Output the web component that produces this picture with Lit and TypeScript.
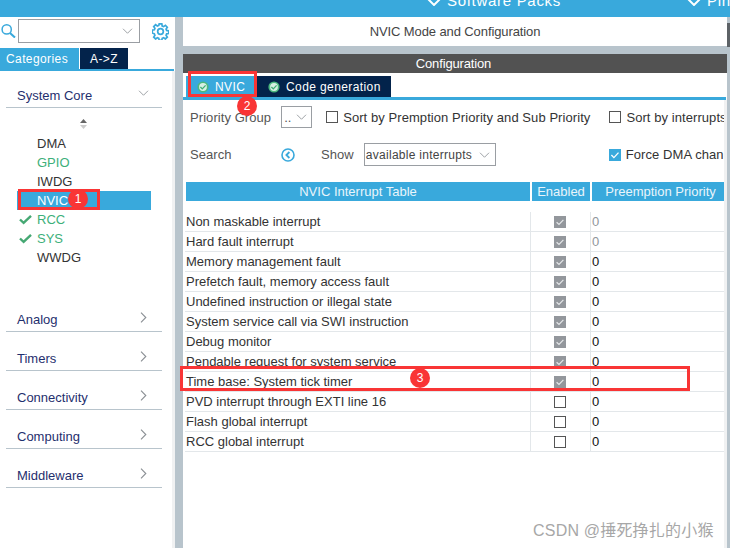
import { LitElement, html, css } from "lit";
import { customElement } from "lit/decorators.js";

const chevDown = (w = 14, h = 8, c = "#8a8f94", sw = 1.1) => html`<svg width=${w} height=${h} viewBox="0 0 14 8"><path d="M1 1l6 6 6-6" fill="none" stroke=${c} stroke-width=${sw}/></svg>`;
const chevRight = html`<svg class="cr" width="7" height="11" viewBox="0 0 7 11"><path d="M1 .7l4.8 4.8L1 10.3" fill="none" stroke="#8a8f94" stroke-width="1.1"/></svg>`;
const tick = html`<svg width="13" height="11" viewBox="0 0 13 11"><path d="M1 5.5l3.6 3.4L12 1.8" fill="none" stroke="#45a873" stroke-width="2.4"/></svg>`;
const okIcon = html`<svg width="12" height="12" viewBox="0 0 12 12"><circle cx="6" cy="6" r="5.6" fill="#4cb87f"/><circle cx="6" cy="6" r="3.9" fill="#d8f0e4"/><path d="M3.4 6l1.9 1.9 3.3-3.5" fill="none" stroke="#3fae75" stroke-width="1.3"/></svg>`;
const gear = html`<svg width="17" height="17" viewBox="0 0 18 18"><g fill="none" stroke="#39a9dc" stroke-width="1.8"><circle cx="9" cy="9" r="3"/><path d="M7.6 1h2.8l.4 2.2 1.5.6 1.9-1.3 2 2-1.3 1.9.6 1.5 2.2.4v2.8l-2.2.4-.6 1.5 1.3 1.9-2 2-1.9-1.3-1.5.6-.4 2.2H7.6l-.4-2.2-1.5-.6-1.9 1.3-2-2 1.3-1.9-.6-1.5L.3 10.4V7.6l2.2-.4.6-1.5-1.3-1.9 2-2 1.9 1.3 1.5-.6z"/></g></svg>`;
const search = html`<svg width="15" height="14" viewBox="0 0 15 14"><g fill="none" stroke="#39a9dc"><circle cx="5.7" cy="5.4" r="4.6" stroke-width="1.5"/><path d="M9 9l5 4.6" stroke-width="2"/></g></svg>`;
const back = html`<svg width="14" height="14" viewBox="0 0 14 14"><circle cx="7" cy="7" r="6" fill="none" stroke="#39a9dc" stroke-width="1.6"/><path d="M8.4 4L5.4 7l3 3" fill="none" stroke="#39a9dc" stroke-width="1.8"/></svg>`;
const checkGrey = html`<svg class="cb" width="12" height="12" viewBox="0 0 12 12"><rect width="12" height="12" fill="#93979c"/><path d="M2.6 6.2l2.4 2.3 4.4-4.6" fill="none" stroke="#e6e8ea" stroke-width="1.2"/></svg>`;
const checkEmpty = html`<svg class="cb" width="12" height="12" viewBox="0 0 12 12"><rect x=".5" y=".5" width="11" height="11" fill="#fff" stroke="#555" stroke-width="1"/></svg>`;
const checkBlue = html`<svg width="12" height="12" viewBox="0 0 12 12"><rect width="12" height="12" fill="#39a9dc"/><path d="M2.4 6l2.5 2.6 4.6-5" fill="none" stroke="#fff" stroke-width="1.3"/></svg>`;

const rows: [string, boolean, boolean][] = [
  ["Non maskable interrupt", true, true],
  ["Hard fault interrupt", true, true],
  ["Memory management fault", true, false],
  ["Prefetch fault, memory access fault", true, false],
  ["Undefined instruction or illegal state", true, false],
  ["System service call via SWI instruction", true, false],
  ["Debug monitor", true, false],
  ["Pendable request for system service", true, false],
  ["Time base: System tick timer", true, false],
  ["PVD interrupt through EXTI line 16", false, false],
  ["Flash global interrupt", false, false],
  ["RCC global interrupt", false, false],
];

const core: [string, string, boolean][] = [
  ["DMA", "", false],
  ["GPIO", "green", false],
  ["IWDG", "", false],
  ["NVIC", "sel", false],
  ["RCC", "green", true],
  ["SYS", "green", true],
  ["WWDG", "", false],
];

@customElement("app-root")
export class AppRoot extends LitElement {
  static styles = css`
    :host { display: block; width: 730px; height: 548px; position: relative; overflow: hidden; background: #fff;
      font-family: "Liberation Sans", Arial, sans-serif; font-size: 13px; color: #2b2f3a; }
    .top { height: 17px; background: #39a9dc; position: relative; overflow: hidden; color: #fff; font-size: 15px; letter-spacing: .7px; }
    .top .it { position: absolute; top: -8px; display: flex; align-items: center; gap: 6px; white-space: nowrap; line-height: 17px; }
    .top svg { margin-top: 3px; }
    .main { display: flex; height: 531px; }
    .left { width: 175px; flex: none; display: flex; flex-direction: column; }
    .leftbody { flex: 1; border-right: 3px solid #f0f1f2; }
    .gutter { width: 8px; flex: none; background: #b8c4cc; }
    .right { width: 544px; flex: none; display: flex; flex-direction: column; }
    .rightbody { flex: 1; border-right: 3px solid #f0f1f2; }
    .edge { width: 3px; flex: none; background: #b8c4cc; }
    .thumb { height: 24px; margin-top: 6px; background: #5d6266; }
    .searchrow { display: flex; align-items: center; height: 31px; padding: 0 0 3px 1px; box-sizing: border-box; }
    .combo { width: 122px; height: 24px; margin-left: 2px; border: 1px solid #9a9ea3; box-sizing: border-box; display: flex; align-items: center; justify-content: flex-end; padding-right: 6px; }
    .gearb { margin-left: 12px; display: flex; }
    .ltabs { display: flex; height: 21px; border-bottom: 2px solid #39a9dc; margin-right: 1px; color: #fff; font-size: 12px; letter-spacing: .4px; }
    .ltab { height: 21px; display: flex; align-items: center; box-sizing: border-box; }
    .ltab.a { width: 79px; background: #39a9dc; padding-left: 6px; margin-right: 1px; }
    .ltab.b { width: 48px; background: #03234b; justify-content: center; }
    .group { margin: 0 10px 0 6px; border-bottom: 1px solid #b8c4cc; height: 34px; box-sizing: border-box; display: flex; align-items: flex-end; justify-content: space-between; padding: 0 13px 4px 11px; color: #1f2f6e; line-height: 15px; }
    .group .cr { margin: 0 2px 4px 0; }
    .group.first { height: 36px; margin-top: 1px; margin-bottom: 10px; }
    .group.first svg { margin-bottom: 7px; }
    .groups { margin-top: 31px; display: flex; flex-direction: column; gap: 5px; }
    .sort { display: flex; justify-content: center; padding-right: 5px; height: 13px; margin-bottom: 3px; }
    .item { height: 19px; margin-left: 17px; width: 134px; box-sizing: border-box; display: flex; align-items: center; position: relative; padding-left: 20px; color: #333; }
    .item.green { color: #3db07a; }
    .item.sel { background: #39a9dc; color: #fff; }
    .item svg { position: absolute; left: 2px; top: 4px; }
    .title { height: 29px; display: flex; align-items: center; justify-content: center; color: #444; letter-spacing: -.1px; }
    .gap { height: 8px; background: #b8c4cc; }
    .cfg { height: 19px; background: #525252; color: #fff; display: flex; align-items: center; justify-content: center; padding-right: 3px; letter-spacing: -.15px; }
    .rtabs { display: flex; margin: 3px 0 0 3px; height: 21px; color: #fff; font-size: 12px; letter-spacing: .4px; }
    .rtab { display: flex; align-items: center; gap: 6px; height: 21px; box-sizing: border-box; padding-left: 11px; }
    .rtab.a { width: 71px; background: #39a9dc; }
    .rtab.b { width: 134px; background: #03234b; padding-left: 11px; }
    .rline { height: 3px; background: #39a9dc; margin-right: 1px; }
    .opts { padding: 0 0 0 7px; color: #555; white-space: nowrap; overflow: hidden; height: 82px; box-sizing: border-box; letter-spacing: .07px; }
    .opt { display: flex; align-items: center; height: 22px; }
    .opt.o1 { margin-top: 6px; }
    .opt.o2 { margin-top: 15px; height: 23px; }
    .lbl { width: 91px; flex: none; }
    .sel1 { width: 31px; height: 22px; box-sizing: border-box; border: 1px solid #9a9ea3; margin-left: 10px; display: flex; align-items: center; justify-content: space-between; padding: 0 4px 0 2px; flex: none; }
    .chk { display: inline-flex; align-items: center; gap: 5px; color: #333; flex: none; }
    .chk.m15 { margin-left: 14px; }
    .chk.m19 { margin-left: 19px; }
    .chk.m113 { margin-left: 113px; }
    .show { margin-left: 26px; }
    .sel2 { width: 132px; height: 23px; box-sizing: border-box; border: 1px solid #9a9ea3; margin-left: 10px; display: flex; align-items: center; justify-content: space-between; padding: 0 5px 0 1px; color: #444; font-size: 12px; letter-spacing: .28px; flex: none; }
    .thead { display: flex; margin-left: 3px; height: 19px; color: #e9f5fb; gap: 2px; }
    .th { background: #39a9dc; display: flex; align-items: center; justify-content: center; }
    .t1 { width: 344px; }
    .t2 { width: 58px; }
    .t3 { width: 132px; padding-left: 5px; box-sizing: border-box; }
    .tbody { margin-top: 11px; margin-left: 2px; width: 539px; }
    .tr { display: flex; height: 20px; border-bottom: 1px solid #e3e7ea; box-sizing: border-box; }
    .td1 { width: 345px; padding-left: 1px; line-height: 19px; color: #333; white-space: nowrap; box-sizing: border-box; }
    .td2 { width: 61px; border-left: 1px solid #e3e7ea; border-right: 1px solid #e3e7ea; box-sizing: border-box; display: flex; align-items: center; justify-content: center; padding-right: 2px; }
    .td3 { padding-left: 1px; line-height: 19px; color: #111; }
    .td3.dim { color: #8f969c; }
    .cb { display: block; }
    .red { position: absolute; box-sizing: border-box; border: 3px solid #f93535; }
    .r1 { left: 18px; top: 189px; width: 82px; height: 21px; }
    .r2 { left: 188px; top: 71px; width: 69px; height: 26px; }
    .r3 { left: 180px; top: 366px; width: 510px; height: 25px; }
    .badge { position: absolute; width: 20px; height: 20px; border-radius: 50%; background: #f93535; color: #fff; display: flex; align-items: center; justify-content: center; font-size: 12px; }
    .b1 { left: 68px; top: 189px; }
    .b2 { left: 237px; top: 96px; }
    .b3 { left: 410px; top: 368px; }
    .wm { position: absolute; left: 533px; top: 523px; font-size: 16px; letter-spacing: .2px; color: #a7a7a7; font-family: "Liberation Sans", "Noto Sans CJK SC", sans-serif; white-space: nowrap; line-height: 16px; }
    .sw { left: 427px; }
    .pin { left: 687px; }
  `;

  render() {
    return html`
      <div class="top">
        <div class="it sw">${chevDown(14, 8, "#fff", 2)}<span>Software Packs</span></div>
        <div class="it pin">${chevDown(14, 8, "#fff", 2)}<span>Pinout</span></div>
      </div>
      <div class="main">
        <div class="left">
          <div class="searchrow">
            ${search}
            <div class="combo">${chevDown(11, 6)}</div>
            <div class="gearb">${gear}</div>
          </div>
          <div class="ltabs"><div class="ltab a">Categories</div><div class="ltab b">A-&gt;Z</div></div>
          <div class="leftbody">
            <div class="group first"><span>System Core</span>${chevDown(11, 6)}</div>
            <div class="sort"><svg width="9" height="13" viewBox="0 0 9 13"><path d="M4.5 1L8 5H1z" fill="#666"/><path d="M1 7h7L4.5 11z" fill="#ccc"/></svg></div>
            ${core.map(([n, c, t]) => html`<div class="item ${c}">${t ? tick : ""}${n}</div>`)}
            <div class="groups">
              ${["Analog", "Timers", "Connectivity", "Computing", "Middleware"].map((n) => html`<div class="group"><span>${n}</span>${chevRight}</div>`)}
            </div>
          </div>
        </div>
        <div class="gutter"></div>
        <div class="right">
          <div class="title">NVIC Mode and Configuration</div>
          <div class="gap"></div>
          <div class="cfg">Configuration</div>
          <div class="rtabs">
            <div class="rtab a">${okIcon}<span>NVIC</span></div>
            <div class="rtab b">${okIcon}<span>Code generation</span></div>
          </div>
          <div class="rline"></div>
          <div class="rightbody">
            <div class="opts">
              <div class="opt o1">
                <span>Priority Group</span>
                <div class="sel1"><span>..</span>${chevDown(11, 6)}</div>
                <span class="chk m15">${checkEmpty}Sort by Premption Priority and Sub Priority</span>
                <span class="chk m19">${checkEmpty}Sort by interrupts</span>
              </div>
              <div class="opt o2">
                <span class="lbl">Search</span>${back}
                <span class="show">Show</span>
                <div class="sel2"><span>available interrupts</span>${chevDown(11, 6)}</div>
                <span class="chk m113">${checkBlue}Force DMA chan</span>
              </div>
            </div>
            <div class="thead">
              <div class="th t1">NVIC Interrupt Table</div>
              <div class="th t2">Enabled</div>
              <div class="th t3">Preemption Priority</div>
            </div>
            <div class="tbody">
              ${rows.map(([n, on, dim]) => html`<div class="tr">
                <div class="td1">${n}</div>
                <div class="td2">${on ? checkGrey : checkEmpty}</div>
                <div class="td3 ${dim ? "dim" : ""}">0</div>
              </div>`)}
            </div>
          </div>
        </div>
        <div class="edge"><div class="thumb"></div></div>
      </div>
      <div class="red r1"></div>
      <div class="badge b1">1</div>
      <div class="red r2"></div>
      <div class="badge b2">2</div>
      <div class="red r3"></div>
      <div class="badge b3">3</div>
      <div class="wm">CSDN @捶死挣扎的小猴</div>
    `;
  }
}
